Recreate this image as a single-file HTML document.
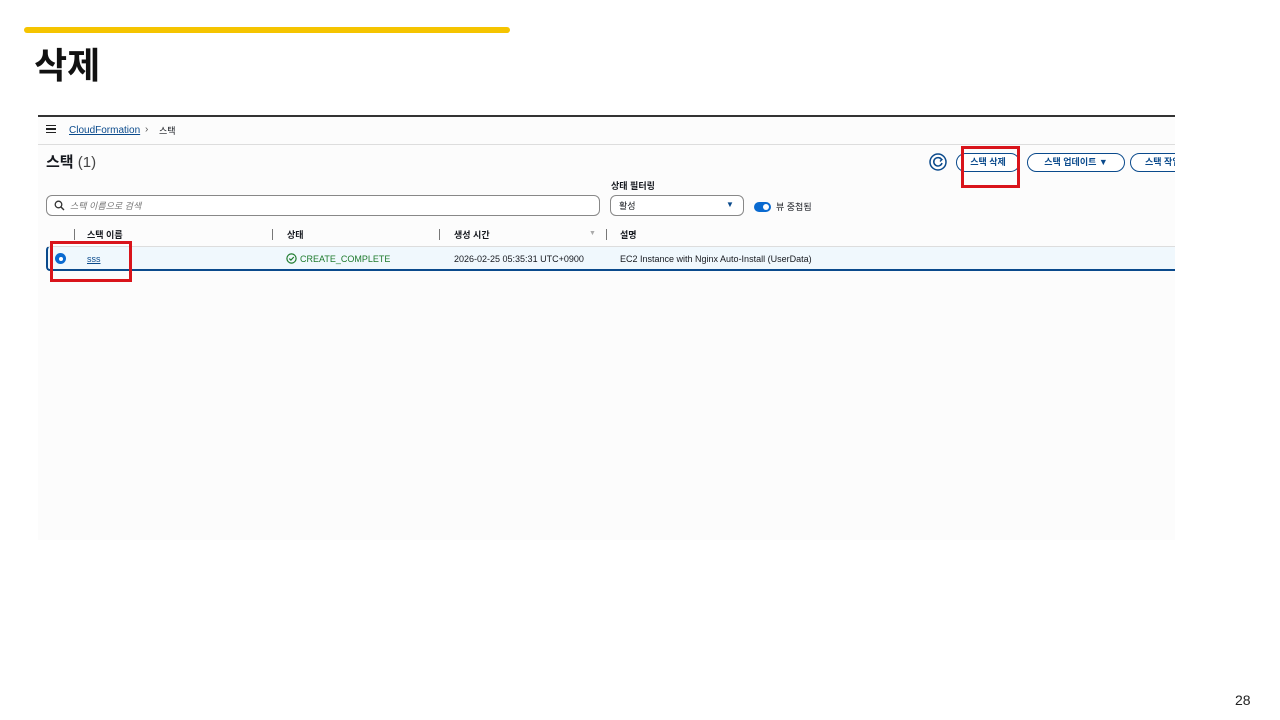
<!DOCTYPE html>
<html><head><meta charset="utf-8"><style>
body{margin:0;width:1280px;height:720px;background:#fff;position:relative;overflow:hidden;font-family:"Liberation Sans","Noto Sans CJK KR",sans-serif;}
.a{position:absolute}
.t{font-size:10px;color:#16191f;white-space:nowrap;line-height:12px}
.btn{position:absolute;height:19px;border:1.5px solid #0a4a8c;border-radius:11px;font-size:9px;font-weight:bold;color:#0a4a8c;line-height:17px;text-align:center;box-sizing:border-box;background:#fff}
.sep{position:absolute;width:1px;height:11px;background:#777;top:229px}
.red{position:absolute;border:3px solid #d9141b;box-sizing:border-box}
</style></head><body>
<div class="a" style="left:24px;top:27px;width:486px;height:6px;background:#f5c400;border-radius:3px"></div>
<div class="a" style="left:34px;top:43px;font-size:36px;font-weight:bold;color:#111;line-height:46px">삭제</div>
<div class="a" style="left:38px;top:115px;width:1137px;height:425px;background:#fcfcfc;overflow:hidden">
 <div class="a" style="left:0;top:0;width:1137px;height:2px;background:#333"></div>
 <div class="a" style="left:0;top:29px;width:1137px;height:1px;background:#ddd"></div>
</div>
<div class="a" style="left:46px;top:125px;width:10px;height:8px;border-top:1.5px solid #222;border-bottom:1.5px solid #222;box-sizing:border-box"></div>
<div class="a" style="left:46px;top:128.3px;width:10px;height:1.5px;background:#222"></div>
<div class="a t" style="left:69px;top:125px;color:#0a4a8c;text-decoration:underline;font-size:10px">CloudFormation</div>
<div class="a t" style="left:145px;top:124px;color:#555">›</div>
<div class="a t" style="left:159px;top:125px;font-size:9px">스택</div>
<div class="a" style="left:46px;top:154px;font-size:15px;font-weight:bold;color:#16191f;line-height:18px">스택 <span style="font-weight:normal;color:#444">(1)</span></div>
<svg class="a" style="left:929px;top:153px" width="18" height="18" viewBox="0 0 18 18"><circle cx="9" cy="9" r="8" fill="#fff" stroke="#0a4a8c" stroke-width="1.5"/><path d="M12.5 6.5A4.2 4.2 0 1 0 13 10" fill="none" stroke="#0a4a8c" stroke-width="1.5"/><path d="M10.5 4.5L13 6.5L11 8.5" fill="none" stroke="#0a4a8c" stroke-width="1.3"/></svg>
<div class="btn" style="left:956px;top:153px;width:64px">스택 삭제</div>
<div class="btn" style="left:1027px;top:153px;width:98px">스택 업데이트 ▼</div>
<div class="btn" style="left:1130px;top:153px;width:60px;text-align:left;padding-left:14px">스택 작업</div>
<div class="a" style="left:1175px;top:140px;width:105px;height:40px;background:#fff"></div>
<div class="red" style="left:961px;top:146px;width:59px;height:42px"></div>
<div class="a t" style="left:611px;top:180px;font-size:9px;font-weight:bold">상태 필터링</div>
<div class="a" style="left:46px;top:195px;width:554px;height:21px;border:1px solid #888;border-radius:6px;box-sizing:border-box;background:#fff"></div>
<svg class="a" style="left:54px;top:200px" width="11" height="11" viewBox="0 0 11 11"><circle cx="4.5" cy="4.5" r="3.3" fill="none" stroke="#333" stroke-width="1.3"/><path d="M7 7L10 10" stroke="#333" stroke-width="1.4"/></svg>
<div class="a t" style="left:70px;top:200px;font-size:9px;color:#777;font-style:italic">스택 이름으로 검색</div>
<div class="a" style="left:610px;top:195px;width:134px;height:21px;border:1px solid #888;border-radius:6px;box-sizing:border-box;background:#fff"></div>
<div class="a t" style="left:619px;top:200px;font-size:9px">활성</div>
<div class="a" style="left:726px;top:200px;font-size:8px;color:#0a4a8c">▼</div>
<div class="a" style="left:754px;top:202px;width:17px;height:10px;border-radius:5px;background:#0a6ad0"></div>
<div class="a" style="left:763px;top:204px;width:6px;height:6px;border-radius:50%;background:#fff"></div>
<div class="a t" style="left:776px;top:201px;font-size:9px">뷰 중첩됨</div>
<div class="sep" style="left:74px"></div><div class="sep" style="left:272px"></div><div class="sep" style="left:439px"></div><div class="sep" style="left:606px"></div>
<div class="a t" style="left:87px;top:229px;font-size:9px;font-weight:bold">스택 이름</div>
<div class="a t" style="left:287px;top:229px;font-size:9px;font-weight:bold">상태</div>
<div class="a t" style="left:454px;top:229px;font-size:9px;font-weight:bold">생성 시간</div>
<div class="a" style="left:589px;top:230px;font-size:7px;color:#aaa">▼</div>
<div class="a t" style="left:620px;top:229px;font-size:9px;font-weight:bold">설명</div>
<div class="a" style="left:46px;top:246px;width:1129px;height:25px;background:#f0f8fd;border-top:1px solid #ddd;border-bottom:2px solid #0a4a8c;border-left:2px solid #0a4a8c;box-sizing:border-box;border-radius:4px 0 0 4px"></div>
<div class="a" style="left:55px;top:253px;width:11px;height:11px;border-radius:50%;background:#0a6ad0"></div>
<div class="a" style="left:58.5px;top:256.5px;width:4px;height:4px;border-radius:50%;background:#fff"></div>
<div class="a t" style="left:87px;top:253px;font-size:9px;color:#0a4a8c;text-decoration:underline">sss</div>
<svg class="a" style="left:286px;top:253px" width="11" height="11" viewBox="0 0 11 11"><circle cx="5.5" cy="5.5" r="4.6" fill="none" stroke="#1d7a2c" stroke-width="1.2"/><path d="M3.3 5.6L4.9 7.1L7.8 4" fill="none" stroke="#1d7a2c" stroke-width="1.2"/></svg>
<div class="a t" style="left:300px;top:253px;font-size:9px;color:#1d7a2c">CREATE_COMPLETE</div>
<div class="a t" style="left:454px;top:253px;font-size:9px">2026-02-25 05:35:31 UTC+0900</div>
<div class="a t" style="left:620px;top:253px;font-size:9px">EC2 Instance with Nginx Auto-Install (UserData)</div>
<div class="red" style="left:50px;top:241px;width:82px;height:41px"></div>
<div class="a" style="left:1235px;top:692px;font-size:14px;color:#222">28</div>
</body></html>
